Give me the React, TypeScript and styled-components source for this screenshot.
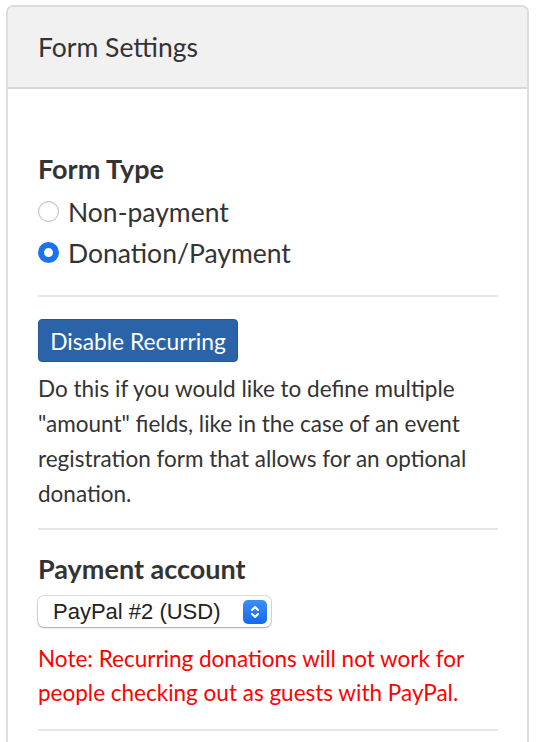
import React, { useState } from "react";
import styled, { createGlobalStyle } from "styled-components";

const GlobalStyle = createGlobalStyle`
  html, body {
    margin: 0;
    padding: 0;
    background: #ffffff;
  }
  body {
    font-family: Lato, "Liberation Sans", sans-serif;
    color: #333333;
  }
`;

const Page = styled.div`
  padding: 5px 7px 0 6px;
`;

const Panel = styled.section`
  border: 2px solid #dcdcdc;
  border-bottom: none;
  border-radius: 7px 7px 0 0;
  overflow: hidden;
  height: 742px;
  box-sizing: border-box;
`;

const PanelHeader = styled.header`
  background: #f1f1f1;
  border-bottom: 2px solid #d8d8d8;
  height: 80px;
  display: flex;
  align-items: center;
  padding-left: 30px;
  font-size: 26.5px;
  color: #333;
`;

const PanelBody = styled.div`
  padding: 63px 29px 0 30px;
`;

const Section = styled.div<{ pad: number }>`
  padding-bottom: ${({ pad }) => pad}px;
  margin-bottom: 22px;
  border-bottom: 2px solid #e6e6e6;
`;

const Heading = styled.h3`
  margin: 0 0 5px;
  font-size: 27px;
  font-weight: 700;
  line-height: 34px;
  color: #333;
`;

const RadioRow = styled.label`
  display: flex;
  align-items: center;
  gap: 9px;
  height: 41px;
  font-size: 26.5px;
  color: #333;
  cursor: pointer;
`;

const RadioDot = styled.span<{ checked: boolean }>`
  width: 21px;
  height: 21px;
  border-radius: 50%;
  box-sizing: border-box;
  flex: none;
  background: ${({ checked }) => (checked ? "#ffffff" : "#ffffff")};
  border: ${({ checked }) => (checked ? "6px solid #1a73f0" : "1px solid #b9b9b9")};
  box-shadow: ${({ checked }) => (checked ? "none" : "inset 0 1px 2px rgba(0,0,0,0.08)")};
`;

const PrimaryButton = styled.button`
  display: block;
  background: #2b63a8;
  border: 1px solid #245894;
  border-radius: 4px;
  color: #ffffff;
  font-family: inherit;
  font-size: 22.8px;
  height: 43px;
  width: 200px;
  padding: 0;
  cursor: pointer;
`;

const Help = styled.p<{ danger?: boolean }>`
  margin: ${({ danger }) => (danger ? "15px" : "9px")} 0 0;
  font-size: 22.5px;
  line-height: ${({ danger }) => (danger ? 34 : 35)}px;
  color: ${({ danger }) => (danger ? "#ff0000" : "#333")};
`;

const SelectBox = styled.div`
  margin-top: 10px;
  width: 233px;
  height: 31px;
  border-radius: 6px;
  background: #ffffff;
  box-shadow: 0 0 0 1px rgba(0, 0, 0, 0.12), 0 1px 2px rgba(0, 0, 0, 0.25);
  display: flex;
  align-items: center;
  justify-content: space-between;
  padding: 0 4px 0 15px;
  box-sizing: border-box;
  font-family: "Liberation Sans", Arial, sans-serif;
  font-size: 22px;
  color: #222;
`;

const Stepper = styled.span`
  width: 24px;
  height: 24px;
  border-radius: 5px;
  background: linear-gradient(#3d8ff8, #1169ee);
  display: flex;
  align-items: center;
  justify-content: center;
`;

export default function App() {
  const [type, setType] = useState("payment");

  return (
    <Page>
      <GlobalStyle />
      <Panel>
        <PanelHeader>Form Settings</PanelHeader>
        <PanelBody>
          <Section pad={22}>
            <Heading>Form Type</Heading>
            <RadioRow onClick={() => setType("none")}>
              <RadioDot checked={type === "none"} />
              Non-payment
            </RadioRow>
            <RadioRow onClick={() => setType("payment")}>
              <RadioDot checked={type === "payment"} />
              Donation/Payment
            </RadioRow>
          </Section>
          <Section pad={17}>
            <PrimaryButton>Disable Recurring</PrimaryButton>
            <Help>
              Do this if you would like to define multiple "amount" fields, like in the case of an event registration
              form that allows for an optional donation.
            </Help>
          </Section>
          <Section pad={19}>
            <Heading>Payment account</Heading>
            <SelectBox>
              PayPal #2 (USD)
              <Stepper>
                <svg width="12" height="16" viewBox="0 0 12 16" fill="none" stroke="#fff" strokeWidth="2" strokeLinecap="round" strokeLinejoin="round">
                  <path d="M3 6l3-3 3 3" />
                  <path d="M3 10l3 3 3-3" />
                </svg>
              </Stepper>
            </SelectBox>
            <Help danger>
              Note: Recurring donations will not work for people checking out as guests with PayPal.
            </Help>
          </Section>
        </PanelBody>
      </Panel>
    </Page>
  );
}
